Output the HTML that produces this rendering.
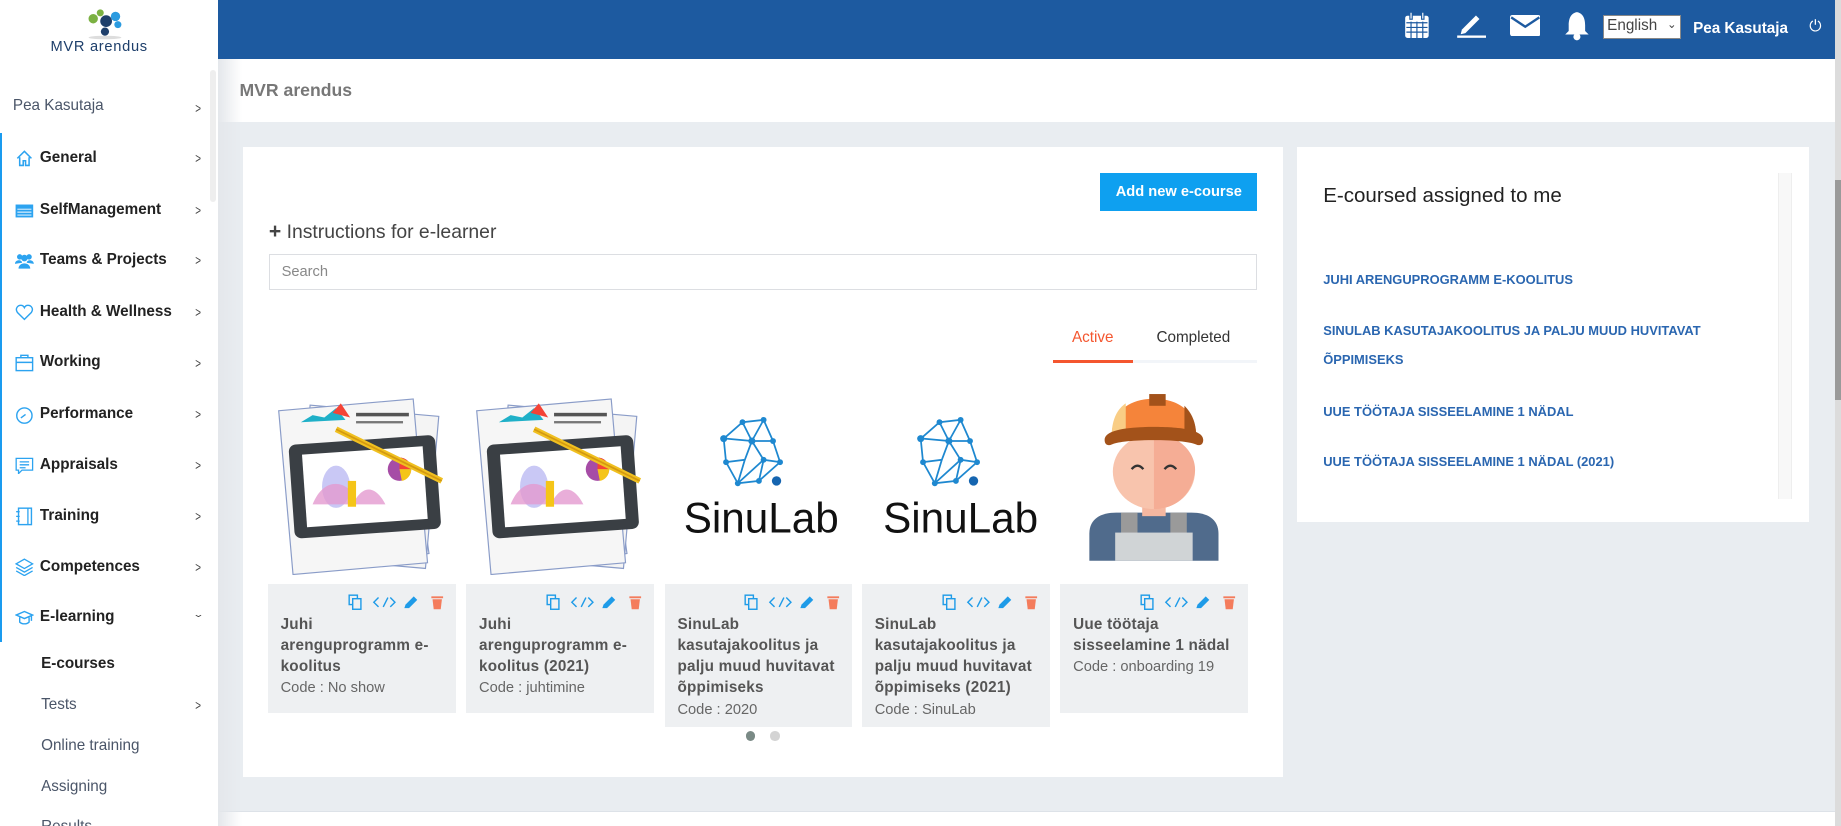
<!DOCTYPE html>
<html><head><meta charset="utf-8"><style>
*{box-sizing:border-box;margin:0;padding:0}
html,body{width:1841px;height:826px;overflow:hidden;background:#fff}
#w{zoom:1.17411;width:1568px;height:704px;position:relative;font-family:"Liberation Sans",sans-serif;overflow:hidden;background:#e9edf1}
.a{position:absolute}
.side{left:0;top:0;width:186px;height:704px;background:#fff}
.mi{position:absolute;left:34px;font-size:13px;font-weight:bold;color:#222}
.ic{position:absolute;left:13px;width:16px;height:16px}
.chev{position:absolute;left:165px;font-size:12px;color:#444;transform:scaleX(.7)}
.sub{position:absolute;left:35px;font-size:13px;color:#4a5568}
.card{background:#eef0f2}
.ct{position:absolute;left:11px;top:26px;font-size:13px;font-weight:bold;color:#555;line-height:18px;white-space:nowrap;letter-spacing:.2px}
.cc{font-weight:normal;color:#666;font-size:12.5px;letter-spacing:0}
.ics{position:absolute;left:68px;top:9px;width:90px;height:14px}
.lk{position:absolute;left:1127px;font-size:11px;font-weight:bold;color:#2a66b0;line-height:25px}
</style></head><body><div id="w">
<div class="a" style="left:186px;top:0;width:1377px;height:50px;background:#1d5aa0"></div>
<div class="a" style="left:1563px;top:0;width:5px;height:704px;background:#dcdcdc"></div>
<div class="a" style="left:1563px;top:153px;width:5px;height:188px;background:#9a9a9a"></div>
<svg class="a" style="left:1196px;top:9px" width="22" height="24" viewBox="0 0 22 24"><rect x="1" y="4" width="20" height="19" rx="2" fill="#fff"/><rect x="5" y="1" width="2" height="6" fill="#fff" stroke="#1d5aa0"/><rect x="15" y="1" width="2" height="6" fill="#fff" stroke="#1d5aa0"/><g stroke="#1d5aa0" stroke-width="1"><path d="M2 10H20M2 14H20M2 18H20M6 9V23M11 9V23M16 9V23"/></g></svg>
<svg class="a" style="left:1240px;top:10px" width="26" height="22" viewBox="0 0 26 22"><path d="M5 15 L17 3 L20 6 L8 18 L4 19Z" fill="#fff"/><rect x="1" y="20" width="25" height="2" fill="#fff"/></svg>
<svg class="a" style="left:1286px;top:13px" width="26" height="18" viewBox="0 0 26 18"><rect x="0" y="0" width="26" height="18" rx="2" fill="#fff"/><path d="M1 2 L13 10 L25 2" stroke="#1d5aa0" stroke-width="2" fill="none"/></svg>
<svg class="a" style="left:1332px;top:9px" width="22" height="26" viewBox="0 0 22 26"><path d="M11 1 C5 2 4 8 4 12 L4 17 L1 20 L21 20 L18 17 L18 12 C18 8 17 2 11 1Z" fill="#fff"/><circle cx="11" cy="22" r="3" fill="#fff"/></svg>
<div class="a" style="left:1365px;top:13px;width:67px;height:20px;background:#fff;border:1px solid #888;font-size:13px;color:#444;padding:1px 3px">English <span style="font-size:10px;float:right">&#8964;</span></div>
<div class="a" style="left:1442px;top:17px;color:#fff;font-weight:bold;font-size:13px">Pea Kasutaja</div>
<div class="a" style="left:1541px;top:15px;color:#fff;font-size:13px">&#x23FB;</div>
<div class="a" style="left:186px;top:50px;width:1377px;height:54px;background:#fff"></div>
<div class="a" style="left:204px;top:68px;font-size:15px;font-weight:bold;color:#777">MVR arendus</div>
<div class="a" style="left:186px;top:691px;width:1377px;height:13px;background:#fff;border-top:1px solid #dde2e8"></div>
<div class="a side">
<svg class="a" style="left:72px;top:6px" width="34" height="28" viewBox="0 0 34 28"><ellipse cx="17" cy="26" rx="14" ry="1.5" fill="#ddd"/><circle cx="7" cy="10" r="4" fill="#7bb142"/><circle cx="13" cy="5" r="3" fill="#7bb142"/><circle cx="18" cy="12" r="5" fill="#1e3f6b"/><circle cx="26" cy="8" r="4" fill="#2b9be0"/><circle cx="28" cy="15" r="3" fill="#2b9be0"/><circle cx="17" cy="21" r="3.5" fill="#1e3f6b"/></svg>
<div class="a" style="left:43px;top:33px;font-size:12.5px;color:#1e3f6b;letter-spacing:.6px">MVR arendus</div>
<div class="a" style="left:179px;top:60px;width:5px;height:112px;background:#eee;border-radius:3px"></div>
<div class="a" style="left:11px;top:83px;font-size:13px;color:#4a5568">Pea Kasutaja</div>
<div class="chev" style="top:85px">&gt;</div>
<div class="a" style="left:0;top:113px;width:2px;height:434px;background:#1a9bef"></div>
<svg class="ic" style="top:127px" viewBox="0 0 16 16"><path d="M2 8 L8 2 L14 8 M4 7 V14 H7 V10 H9 V14 H12 V7" fill="none" stroke="#2ca3f0" stroke-width="1.3"/></svg><div class="mi" style="top:127px">General</div><div class="chev" style="top:128px">&gt;</div>
<svg class="ic" style="top:171px" viewBox="0 0 16 16"><rect x="0.5" y="3" width="15" height="11" fill="#2ca3f0"/><path d="M2 7H14M2 9.5H14M2 12H14" stroke="#fff" stroke-width=".8"/></svg><div class="mi" style="top:171px">SelfManagement</div><div class="chev" style="top:172px">&gt;</div>
<svg class="ic" style="top:214px" viewBox="0 0 16 16"><circle cx="4" cy="5" r="2.3" fill="#2ca3f0"/><circle cx="12" cy="5" r="2.3" fill="#2ca3f0"/><circle cx="8" cy="6" r="2.8" fill="#2ca3f0"/><path d="M3 15 C3 9 13 9 13 15Z M0 11 C0 7 6 7 6 10Z M10 10 C10 7 16 7 16 11Z" fill="#2ca3f0"/></svg><div class="mi" style="top:214px">Teams &amp; Projects</div><div class="chev" style="top:215px">&gt;</div>
<svg class="ic" style="top:258px" viewBox="0 0 16 16"><path d="M8 14 L2 8 C0 5 2 2 5 2 C6.5 2 7.5 3 8 4 C8.5 3 9.5 2 11 2 C14 2 16 5 14 8Z" fill="none" stroke="#2ca3f0" stroke-width="1.2"/></svg><div class="mi" style="top:258px">Health &amp; Wellness</div><div class="chev" style="top:259px">&gt;</div>
<svg class="ic" style="top:301px" viewBox="0 0 16 16"><rect x="1" y="4" width="14" height="11" fill="none" stroke="#2ca3f0" stroke-width="1.2"/><path d="M5 4V2H11V4M1 8H15" stroke="#2ca3f0" fill="none" stroke-width="1.2"/></svg><div class="mi" style="top:301px">Working</div><div class="chev" style="top:302px">&gt;</div>
<svg class="ic" style="top:345px" viewBox="0 0 16 16"><circle cx="8" cy="9" r="6.5" fill="none" stroke="#2ca3f0" stroke-width="1.2"/><path d="M5 11 L9 8" stroke="#2ca3f0" stroke-width="1.2"/></svg><div class="mi" style="top:345px">Performance</div><div class="chev" style="top:346px">&gt;</div>
<svg class="ic" style="top:388px" viewBox="0 0 16 16"><path d="M1 2H15V12H6L3 15V12H1Z M4 5H12M4 7.5H12M4 10H9" fill="none" stroke="#2ca3f0" stroke-width="1.1"/></svg><div class="mi" style="top:388px">Appraisals</div><div class="chev" style="top:389px">&gt;</div>
<svg class="ic" style="top:432px" viewBox="0 0 16 16"><rect x="3" y="1" width="11" height="14" fill="none" stroke="#2ca3f0" stroke-width="1.2"/><path d="M11 1V15M1 4H4M1 8H4M1 12H4" stroke="#2ca3f0" stroke-width="1.1"/></svg><div class="mi" style="top:432px">Training</div><div class="chev" style="top:433px">&gt;</div>
<svg class="ic" style="top:475px" viewBox="0 0 16 16"><path d="M8 1 L15 5 L8 9 L1 5Z M1 8 L8 12 L15 8 M1 11 L8 15 L15 11" fill="none" stroke="#2ca3f0" stroke-width="1.1"/></svg><div class="mi" style="top:475px">Competences</div><div class="chev" style="top:476px">&gt;</div>
<svg class="ic" style="top:518px" viewBox="0 0 16 16"><path d="M1 6 L8 3 L15 6 L8 9Z M4 8 V12 C6 14 10 14 12 12 V8 M14 6 V11" fill="none" stroke="#2ca3f0" stroke-width="1.2"/></svg><div class="mi" style="top:518px">E-learning</div><div class="a" style="left:164px;top:516px;font-size:12px;color:#444;transform:scaleY(.6)">&#8964;</div>
<div class="sub" style="top:558px;font-weight:bold;color:#222">E-courses</div>
<div class="sub" style="top:593px">Tests</div><div class="chev" style="top:594px">&gt;</div>
<div class="sub" style="top:628px">Online training</div>
<div class="sub" style="top:663px">Assigning</div>
<div class="sub" style="top:697px">Results</div>
</div>
<div class="a" style="left:186px;top:50px;width:20px;height:654px;background:linear-gradient(90deg,#e4e7eb,rgba(233,237,241,0))"></div>
<div class="a" style="left:207px;top:125px;width:886px;height:537px;background:#fff"></div>
<div class="a" style="left:937px;top:147px;width:134px;height:33px;background:#0ea0f0;color:#fff;font-weight:bold;font-size:12.5px;text-align:center;line-height:33px">Add new e-course</div>
<div class="a" style="left:229px;top:187px;font-size:16.5px;color:#444"><b style="font-size:18px">+</b> Instructions for e-learner</div>
<div class="a" style="left:229px;top:216px;width:842px;height:31px;border:1px solid #dcdee2;font-size:12.5px;color:#888;padding:8px 10px">Search</div>
<div class="a" style="left:913px;top:280px;font-size:13px;color:#f4562f">Active</div>
<div class="a" style="left:985px;top:280px;font-size:13px;color:#333">Completed</div>
<div class="a" style="left:897px;top:307px;width:174px;height:2px;background:#f2f5f9"></div>
<div class="a" style="left:897px;top:307px;width:68px;height:2px;background:#f4562f"></div>
<svg class="a" style="left:228px;top:330px" width="160" height="160" viewBox="0 0 160 160"><g stroke="#8a9cc8" stroke-width="1"><rect x="20" y="40" width="110" height="110" fill="#f2f2f2" transform="rotate(-8 75 95)"/><rect x="30" y="20" width="110" height="130" fill="#f4f4f4" transform="rotate(5 85 85)"/><rect x="15" y="15" width="115" height="140" fill="#f6f6f6" transform="rotate(-5 72 85)"/></g><path d="M28 30 L38 24 L48 26 L58 18 L66 28 L28 30Z" fill="#1fb0c8"/><path d="M55 22 L62 14 L70 26Z" fill="#f44336"/><rect x="75" y="22" width="45" height="3" fill="#555"/><rect x="75" y="29" width="40" height="2" fill="#777"/><rect x="20" y="45" width="125" height="80" rx="6" fill="#3a3f44" transform="rotate(-4 82 85)"/><rect x="31" y="54" width="103" height="62" fill="#fff" transform="rotate(-4 82 85)"/><ellipse cx="58" cy="85" rx="12" ry="18" fill="#c9c8f5"/><path d="M38 100 C48 75 68 80 75 95 C85 80 95 90 100 100Z" fill="#e39ad0" opacity=".8"/><rect x="68" y="80" width="7" height="22" fill="#f5c518"/><circle cx="112" cy="70" r="10" fill="#a64ca6"/><path d="M112 70 L112 60 A10 10 0 0 1 122 70Z" fill="#f44336"/><path d="M112 70 L122 70 A10 10 0 0 1 114 80Z" fill="#f5c518"/><path d="M58 36 L148 80" stroke="#f0c020" stroke-width="5"/><path d="M58 36 L148 80" stroke="#d49a10" stroke-width="1.5"/></svg>
<svg class="a" style="left:397px;top:330px" width="160" height="160" viewBox="0 0 160 160"><g stroke="#8a9cc8" stroke-width="1"><rect x="20" y="40" width="110" height="110" fill="#f2f2f2" transform="rotate(-8 75 95)"/><rect x="30" y="20" width="110" height="130" fill="#f4f4f4" transform="rotate(5 85 85)"/><rect x="15" y="15" width="115" height="140" fill="#f6f6f6" transform="rotate(-5 72 85)"/></g><path d="M28 30 L38 24 L48 26 L58 18 L66 28 L28 30Z" fill="#1fb0c8"/><path d="M55 22 L62 14 L70 26Z" fill="#f44336"/><rect x="75" y="22" width="45" height="3" fill="#555"/><rect x="75" y="29" width="40" height="2" fill="#777"/><rect x="20" y="45" width="125" height="80" rx="6" fill="#3a3f44" transform="rotate(-4 82 85)"/><rect x="31" y="54" width="103" height="62" fill="#fff" transform="rotate(-4 82 85)"/><ellipse cx="58" cy="85" rx="12" ry="18" fill="#c9c8f5"/><path d="M38 100 C48 75 68 80 75 95 C85 80 95 90 100 100Z" fill="#e39ad0" opacity=".8"/><rect x="68" y="80" width="7" height="22" fill="#f5c518"/><circle cx="112" cy="70" r="10" fill="#a64ca6"/><path d="M112 70 L112 60 A10 10 0 0 1 122 70Z" fill="#f44336"/><path d="M112 70 L122 70 A10 10 0 0 1 114 80Z" fill="#f5c518"/><path d="M58 36 L148 80" stroke="#f0c020" stroke-width="5"/><path d="M58 36 L148 80" stroke="#d49a10" stroke-width="1.5"/></svg>
<svg class="a" style="left:566px;top:330px" width="160" height="160" viewBox="0 0 160 160"><g stroke="#1e88d0" stroke-width="1.5" fill="none"><path d="M50 44 L66 30 L84 28 L92 46 L98 64 L80 80 L62 82 L52 64Z M66 30 L74 46 L92 46 M74 46 L52 44 M74 46 L84 62 L98 64 M84 62 L62 82 M84 62 L80 80 M74 46 L68 62 L52 64 M68 62 L62 82 M84 28 L74 46"/></g><g fill="#1e88d0"><circle cx="66" cy="30" r="2.5"/><circle cx="84" cy="28" r="2.5"/><circle cx="50" cy="44" r="3"/><circle cx="74" cy="46" r="3"/><circle cx="92" cy="46" r="2.5"/><circle cx="98" cy="64" r="2.5"/><circle cx="80" cy="80" r="2.5"/><circle cx="62" cy="82" r="2.5"/><circle cx="52" cy="64" r="2.5"/><circle cx="84" cy="62" r="2.5"/><circle cx="95" cy="80" r="4" fill="#1565b0"/></g><text x="82" y="124" text-anchor="middle" font-family="Liberation Sans" font-size="36" fill="#111">SinuLab</text></svg>
<svg class="a" style="left:734px;top:330px" width="160" height="160" viewBox="0 0 160 160"><g stroke="#1e88d0" stroke-width="1.5" fill="none"><path d="M50 44 L66 30 L84 28 L92 46 L98 64 L80 80 L62 82 L52 64Z M66 30 L74 46 L92 46 M74 46 L52 44 M74 46 L84 62 L98 64 M84 62 L62 82 M84 62 L80 80 M74 46 L68 62 L52 64 M68 62 L62 82 M84 28 L74 46"/></g><g fill="#1e88d0"><circle cx="66" cy="30" r="2.5"/><circle cx="84" cy="28" r="2.5"/><circle cx="50" cy="44" r="3"/><circle cx="74" cy="46" r="3"/><circle cx="92" cy="46" r="2.5"/><circle cx="98" cy="64" r="2.5"/><circle cx="80" cy="80" r="2.5"/><circle cx="62" cy="82" r="2.5"/><circle cx="52" cy="64" r="2.5"/><circle cx="84" cy="62" r="2.5"/><circle cx="95" cy="80" r="4" fill="#1565b0"/></g><text x="84" y="124" text-anchor="middle" font-family="Liberation Sans" font-size="36" fill="#111">SinuLab</text></svg>
<svg class="a" style="left:903px;top:330px" width="160" height="160" viewBox="0 0 160 160"><path d="M25 148 L25 125 C25 112 35 107 48 107 L112 107 C125 107 135 112 135 125 L135 148Z" fill="#506b8c"/><rect x="52" y="107" width="14" height="26" fill="#9a9a9a"/><rect x="94" y="107" width="14" height="26" fill="#9a9a9a"/><rect x="47" y="124" width="66" height="24" fill="#d0d4d6"/><rect x="70" y="90" width="20" height="20" fill="#f5b7a0"/><ellipse cx="80" cy="72" rx="35" ry="32" fill="#f8c4ad"/><path d="M80 40 C100 40 116 55 115 72 C113 90 100 104 80 104Z" fill="#f5ad95"/><path d="M44 42 C44 20 60 10 80 10 C100 10 116 20 116 42Z" fill="#f5843a"/><path d="M44 42 C44 26 50 18 56 14 L56 42Z" fill="#f9cd85"/><path d="M106 16 C112 22 116 30 116 42 L106 42Z" fill="#a3521a"/><rect x="76" y="6" width="14" height="10" fill="#a3521a"/><path d="M38 45 C38 36 60 34 80 34 C100 34 122 36 122 45 C122 50 118 50 116 49 C105 44 55 44 44 49 C42 50 38 50 38 45Z" fill="#a3521a"/><path d="M61 70 Q66 64 71 70 M89 70 Q94 64 99 70" stroke="#333" stroke-width="2" fill="none"/></svg>
<div class="a card" style="left:228px;top:497px;width:160px;height:110px"><svg class="ics" viewBox="0 0 90 14"><g fill="none" stroke="#1e9be8" stroke-width="1.2"><rect x="1" y="1" width="7" height="8"/><rect x="4" y="4" width="7" height="9" fill="#eef0f2"/><path d="M26 3 L22 7 L26 11 M32 3 L32 3 M34 3 L30 11 M36 3 L40 7 L36 11"/></g><path d="M48 12 L49 9 L56 2 L59 5 L52 12Z" fill="#1e9be8"/><g fill="#f47c5c"><rect x="71" y="2" width="10" height="1.6"/><path d="M72 4.5 H80 L79 13 H73Z"/></g></svg><div class="ct">Juhi<br>arenguprogramm e-<br>koolitus<br><span class="cc">Code : No show</span></div></div>
<div class="a card" style="left:397px;top:497px;width:160px;height:110px"><svg class="ics" viewBox="0 0 90 14"><g fill="none" stroke="#1e9be8" stroke-width="1.2"><rect x="1" y="1" width="7" height="8"/><rect x="4" y="4" width="7" height="9" fill="#eef0f2"/><path d="M26 3 L22 7 L26 11 M34 3 L30 11 M36 3 L40 7 L36 11"/></g><path d="M48 12 L49 9 L56 2 L59 5 L52 12Z" fill="#1e9be8"/><g fill="#f47c5c"><rect x="71" y="2" width="10" height="1.6"/><path d="M72 4.5 H80 L79 13 H73Z"/></g></svg><div class="ct">Juhi<br>arenguprogramm e-<br>koolitus (2021)<br><span class="cc">Code : juhtimine</span></div></div>
<div class="a card" style="left:566px;top:497px;width:160px;height:122px"><svg class="ics" viewBox="0 0 90 14"><g fill="none" stroke="#1e9be8" stroke-width="1.2"><rect x="1" y="1" width="7" height="8"/><rect x="4" y="4" width="7" height="9" fill="#eef0f2"/><path d="M26 3 L22 7 L26 11 M34 3 L30 11 M36 3 L40 7 L36 11"/></g><path d="M48 12 L49 9 L56 2 L59 5 L52 12Z" fill="#1e9be8"/><g fill="#f47c5c"><rect x="71" y="2" width="10" height="1.6"/><path d="M72 4.5 H80 L79 13 H73Z"/></g></svg><div class="ct">SinuLab<br>kasutajakoolitus ja<br>palju muud huvitavat<br>õppimiseks<br><span class="cc">Code : 2020</span></div></div>
<div class="a card" style="left:734px;top:497px;width:160px;height:122px"><svg class="ics" viewBox="0 0 90 14"><g fill="none" stroke="#1e9be8" stroke-width="1.2"><rect x="1" y="1" width="7" height="8"/><rect x="4" y="4" width="7" height="9" fill="#eef0f2"/><path d="M26 3 L22 7 L26 11 M34 3 L30 11 M36 3 L40 7 L36 11"/></g><path d="M48 12 L49 9 L56 2 L59 5 L52 12Z" fill="#1e9be8"/><g fill="#f47c5c"><rect x="71" y="2" width="10" height="1.6"/><path d="M72 4.5 H80 L79 13 H73Z"/></g></svg><div class="ct">SinuLab<br>kasutajakoolitus ja<br>palju muud huvitavat<br>õppimiseks (2021)<br><span class="cc">Code : SinuLab</span></div></div>
<div class="a card" style="left:903px;top:497px;width:160px;height:110px"><svg class="ics" viewBox="0 0 90 14"><g fill="none" stroke="#1e9be8" stroke-width="1.2"><rect x="1" y="1" width="7" height="8"/><rect x="4" y="4" width="7" height="9" fill="#eef0f2"/><path d="M26 3 L22 7 L26 11 M34 3 L30 11 M36 3 L40 7 L36 11"/></g><path d="M48 12 L49 9 L56 2 L59 5 L52 12Z" fill="#1e9be8"/><g fill="#f47c5c"><rect x="71" y="2" width="10" height="1.6"/><path d="M72 4.5 H80 L79 13 H73Z"/></g></svg><div class="ct">Uue töötaja<br>sisseelamine 1 nädal<br><span class="cc">Code : onboarding 19</span></div></div>
<div class="a" style="left:635px;top:623px;width:8px;height:8px;border-radius:50%;background:#7a8a86"></div>
<div class="a" style="left:656px;top:623px;width:8px;height:8px;border-radius:50%;background:#d4d4d4"></div>
<div class="a" style="left:1105px;top:125px;width:436px;height:320px;background:#fff"></div>
<div class="a" style="left:1514px;top:147px;width:12px;height:278px;background:#f8f8f8;border-left:1px solid #eee;border-right:1px solid #eee"></div>
<div class="a" style="left:1127px;top:157px;font-size:17.5px;color:#222">E-coursed assigned to me</div>
<div class="lk" style="top:226px">JUHI ARENGUPROGRAMM E-KOOLITUS</div>
<div class="lk" style="top:269px;width:330px">SINULAB KASUTAJAKOOLITUS JA PALJU MUUD HUVITAVAT ÕPPIMISEKS</div>
<div class="lk" style="top:338px">UUE TÖÖTAJA SISSEELAMINE 1 NÄDAL</div>
<div class="lk" style="top:381px">UUE TÖÖTAJA SISSEELAMINE 1 NÄDAL (2021)</div>
</div></body></html>
